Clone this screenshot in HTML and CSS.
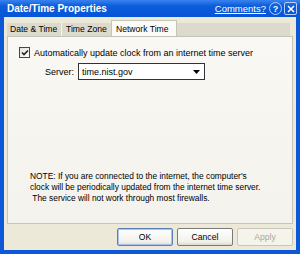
FILE: index.html
```html
<!DOCTYPE html>
<html lang="en">
<head>
    <meta charset="UTF-8">
    <title>Date/Time Properties</title>
    <link rel="stylesheet" href="styles.css">
</head>
<body>

<div class="window">
    <div class="titlebar">
        <span class="title">Date/Time Properties</span>
        <a href="#" class="comments">Comments?</a>
        <span class="cap-btn help">?</span>
        <span class="cap-btn close">
            <svg width="8" height="8" viewBox="0 0 8 8">
                <path d="M1 1 L7 7 M7 1 L1 7" stroke="#fff" stroke-width="1.5"/>
            </svg>
        </span>
    </div>

    <div class="client">
        <div class="tabs">
            <div class="tab first">Date &amp; Time</div>
            <div class="tab">Time Zone</div>
            <div class="tab active">Network Time</div>
        </div>

        <div class="panel">
            <label class="check-row">
                <span class="checkbox">
                    <svg width="8" height="8" viewBox="0 0 8 8">
                        <path d="M1 3.5 L3 5.5 L7 1.5" fill="none" stroke="#222" stroke-width="1.6"/>
                    </svg>
                </span>
                Automatically update clock from an internet time server
            </label>

            <div class="server-row">
                <span class="server-label">Server:</span>
                <div class="combo">
                    <span class="combo-text">time.nist.gov</span>
                    <span class="combo-arrow">
                        <svg width="7" height="4" viewBox="0 0 7 4">
                            <path d="M0 0 H7 L3.5 4 Z" fill="#000"/>
                        </svg>
                    </span>
                </div>
            </div>

            <div class="note">
                NOTE: If you are connected to the internet, the computer's<br>
                clock will be periodically updated from the internet time server.<br>
                &nbsp;The service will not work through most firewalls.
            </div>
        </div>

        <div class="buttons">
            <button class="default">OK</button>
            <button>Cancel</button>
            <button disabled>Apply</button>
        </div>
    </div>
</div>

</body>
</html>
```

FILE: styles.css
```css
body {
    margin: 0;
    padding: 0;
    font-family: 'Liberation Sans', Arial, sans-serif;
    font-size: 8.4px;
    color: #000;
}
.window {
    width: 300px;
    height: 254px;
    box-sizing: border-box;
    background: #0c58d8;
    padding: 0 4px 4px 4px;
    display: flex;
    flex-direction: column;
}
.titlebar {
    height: 17px;
    display: flex;
    align-items: center;
    background: linear-gradient(#3a82f0, #0b5ddc 35%, #0655d6);
    margin: 0 -4px;
    padding: 0 3px 0 7px;
}
.title {
    color: #fff;
    font-weight: bold;
    font-size: 10px;
    flex: 1;
}
.comments {
    color: #fff;
    font-size: 9.5px;
    margin-right: 3px;
}
.cap-btn {
    width: 11px;
    height: 11px;
    display: flex;
    align-items: center;
    justify-content: center;
    color: #fff;
    font-weight: bold;
    font-size: 9px;
}
.help {
    border: 1px solid #b8cdf3;
    border-radius: 50%;
    margin-right: 2px;
}
.close {
    border: 1px solid #b8cdf3;
    border-radius: 2px;
}
.client {
    flex: 1;
    background: #ece9d8;
    padding: 3px 3px 0 3px;
    display: flex;
    flex-direction: column;
}
.tabs {
    display: flex;
    align-items: flex-end;
    height: 16px;
    background: linear-gradient(to bottom, #ece9d8 3px, #dcdacd 3px);
    margin-right: 3px;
}
.tab {
    height: 13px;
    line-height: 13px;
    padding: 0 3px;
    font-size: 8.6px;
    white-space: nowrap;
    border-left: 1px solid #f4f3ec;
    box-sizing: border-box;
}
.tab.first {
    width: 54px;
    border-left: none;
}
.tab:nth-child(2) {
    width: 50px;
    padding-left: 4px;
}
.tab.active {
    width: 66px;
    height: 16px;
    line-height: 16px;
    padding-left: 4px;
    background: #fbfbf8;
    border: 1px solid #c6c4b6;
    border-bottom: none;
}
.panel {
    height: 188px;
    box-sizing: border-box;
    border: 1px solid #c6c4b6;
    background: linear-gradient(#f9f8f4, #f3f2ec);
    padding: 10px 0 0 11px;
    display: flex;
    flex-direction: column;
}
.check-row {
    display: flex;
    align-items: center;
    gap: 4px;
    font-size: 9px;
}
.checkbox {
    width: 9px;
    height: 9px;
    border: 1px solid #1c5180;
    background: linear-gradient(135deg, #e4e3dc, #fdfdfb);
    display: flex;
    align-items: center;
    justify-content: center;
}
.server-row {
    display: flex;
    align-items: center;
    margin: 5px 0 0 26px;
    font-size: 9px;
}
.server-label {
    width: 33px;
}
.combo {
    width: 127px;
    height: 17px;
    box-sizing: border-box;
    border: 1px solid #333;
    background: #fff;
    display: flex;
    align-items: center;
}
.combo-text {
    flex: 1;
    padding-left: 3px;
}
.combo-arrow {
    width: 15px;
    display: flex;
    justify-content: center;
}
.note {
    margin-top: auto;
    margin-bottom: 19px;
    padding-left: 11px;
    line-height: 11px;
}
.buttons {
    display: flex;
    justify-content: flex-end;
    gap: 4px;
    padding: 4px 0 0 0;
}
button {
    width: 56px;
    height: 18px;
    font-family: inherit;
    font-size: 8.6px;
    background: linear-gradient(#fefefe, #f2f1ea 80%, #dcd8cc);
    border: 1px solid #7a7a7a;
    border-radius: 2px;
    padding: 0;
    color: #000;
}
button.default {
    border-color: #5b7fb8;
    box-shadow: inset 0 0 0 1px #a9c4ef;
}
button:disabled {
    color: #aca899;
    border-color: #c9c7ba;
    background: #f5f4ea;
}
```
